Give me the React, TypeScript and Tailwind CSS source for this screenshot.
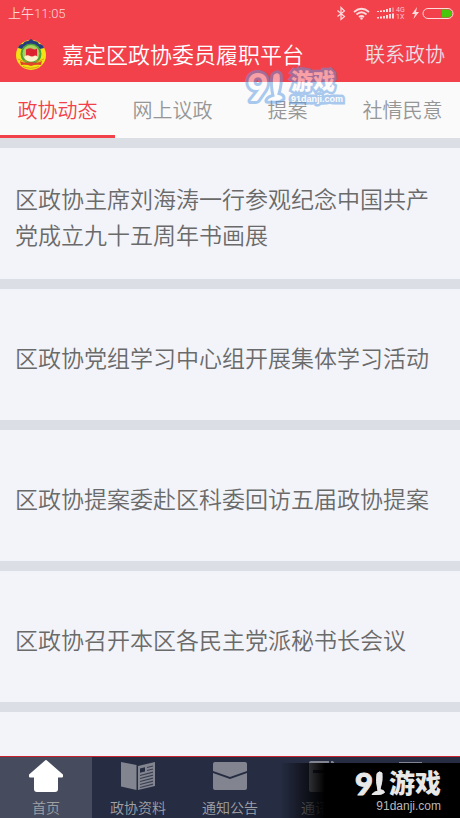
import { useState } from 'react';
import type { ReactNode } from 'react';

const TABS = ['政协动态', '网上议政', '提案', '社情民意'];

const NEWS = [
  '区政协主席刘海涛一行参观纪念中国共产党成立九十五周年书画展',
  '区政协党组学习中心组开展集体学习活动',
  '区政协提案委赴区科委回访五届政协提案',
  '区政协召开本区各民主党派秘书长会议',
  '',
];

const NAV: { label: string; icon: ReactNode }[] = [
  { label: '首页', icon: <HomeIcon /> },
  { label: '政协资料', icon: <PaperIcon /> },
  { label: '通知公告', icon: <MailIcon /> },
  { label: '通讯录', icon: <ContactsIcon /> },
  { label: '', icon: <MoreIcon /> },
];

function HomeIcon() {
  return (
    <svg viewBox="0 0 36 34" className="h-[34px] w-9" fill="#fff" stroke="#fff" strokeWidth="2" strokeLinejoin="round">
      <path d="M18 2 34 16V17.500H29V30Q29 32 27 32H9Q7 32 7 30V17.500H2V16Z" />
    </svg>
  );
}

function PaperIcon() {
  return (
    <svg viewBox="0 0 36 34" className="h-[34px] w-9" fill="#82858f">
      <path d="M1 3 16.500 6V31L1 27.500Z" />
      <path d="M18 7 35 3V27L18 31Z" />
      <path d="M20 9.500 25 8.300V12.500L20 13.700Z" fill="#262c42" />
      <path
        d="M27 8.500 33 7M27 11.500 33 10M20 16.500 33 13.200M20 19.500 33 16.200M20 22.500 33 19.200M20 25.500 33 22.200M20 28.500 33 25.200"
        stroke="#3a3f53"
        strokeWidth="1.200"
      />
    </svg>
  );
}

function MailIcon() {
  return (
    <svg viewBox="0 0 36 34" className="h-[34px] w-9" fill="#82858f">
      <path d="M3 3H33Q35 3 35 5V12L18 18 1 12V5Q1 3 3 3Z" />
      <path d="M1 14 18 20 35 14V29Q35 31 33 31H3Q1 31 1 29Z" />
    </svg>
  );
}

function ContactsIcon() {
  return (
    <svg viewBox="0 0 36 34" className="h-[34px] w-9" fill="#82858f">
      <path d="M7 2H25V33H7Q5 33 5 31V4Q5 2 7 2Z" />
      <path d="M27 2H29L31 5V33H27Z" />
      <path d="M9 11H21V14H9Z" fill="#262c42" />
    </svg>
  );
}

function MoreIcon() {
  return (
    <svg viewBox="0 0 36 34" className="h-[34px] w-9" fill="#82858f">
      <path d="M3 3H26V8H3ZM3 14H26V19H3ZM3 25H26V30H3Z" />
    </svg>
  );
}

function Emblem() {
  return (
    <svg viewBox="0 0 32 32" className="size-8">
      <circle cx="16" cy="16" r="15" fill="#f4e313" />
      <path d="M3 9Q4 5 8 5Q9 2 13 2L16 0 19 2Q23 2 24 5Q28 5 29 9L25 10 22 7 19 8 16 5 13 8 10 7 7 10Z" fill="#283b80" />
      <circle cx="16" cy="15" r="10.500" fill="#4aa13c" />
      <circle cx="16" cy="14.500" r="8.500" fill="#a9cf5c" />
      <path d="M11 10.500Q15 8.500 18 10Q20 11 22 9.500V18H11Z" fill="#dc2430" />
      <path d="M9 18Q11 15.500 14 16.500Q17 18.500 20 16.500Q23 17 23 19Q21 22.500 16 22.500Q11 22.500 9 18Z" fill="#fbf3cd" />
      <path d="M5 22Q10 25 16 23Q22 25 27 22L26 26Q21 25 16 27Q11 25 6 26Z" fill="#e0452a" />
      <path d="M8 27.500Q16 31 24 27.500M3 20Q8 23 12 22M29 20Q24 23 20 22" fill="none" stroke="#d9a31c" strokeWidth="1" />
    </svg>
  );
}

function StatusIcons() {
  return (
    <svg viewBox="0 0 120 16" className="h-4 w-[120px]" fill="none" stroke="#ffdadd">
      <path d="M1.500 4.500 8.500 10.500 5 13.500V1.500L8.500 5 1.500 10.500" strokeWidth="1.200" />
      <path d="M18 6Q25.500 -0.500 33 6M20.500 8.500Q25.500 4 30.500 8.500M23 11Q25.500 9 28 11" strokeWidth="1.700" />
      <circle cx="25.500" cy="12.500" r="1.200" fill="#ffdadd" stroke="none" />
      <path d="M42 5V6M45 4.500V6M48 4V6M51 3V6M54 2V6M42 11V12.500M45 10.500V12.500M48 10V12.500M51 9V12.500M54 8V12.500" strokeWidth="2" />
      <path d="M57 1.500V6" strokeWidth="2" opacity="0.400" />
      <path d="M57 7.500V12.500" strokeWidth="2" />
      <g fill="#ffc3c8" stroke="none" fontFamily="Roboto, sans-serif" fontSize="7" fontWeight="400">
        <text x="60" y="6">4G</text>
        <text x="60" y="13">1X</text>
      </g>
      <path d="M81 1 76 8H79L77.500 13 83 6H80Z" fill="#ffdadd" stroke="none" />
      <rect x="87" y="2.500" width="30" height="10" rx="5" />
      <path d="M106 3.500H112Q116 4.500 116 7.500Q116 10.500 112 11.500H106Z" fill="#47c70b" stroke="none" />
    </svg>
  );
}

// "91" mark: a numeral followed by a shoe-shaped stroke
function BrandMark({ className, outlined }: { className: string; outlined?: boolean }) {
  return (
    <svg
      viewBox="0 0 34 28"
      className={className}
      fill={outlined ? '#fff' : '#e8e8e8'}
      stroke={outlined ? '#5a98e4' : '#e8e8e8'}
      strokeWidth={outlined ? 5 : 1}
      strokeLinejoin="round"
      paintOrder="stroke"
      overflow="visible"
    >
      <text x="0" y="25" fontFamily="Lato, sans-serif" fontSize="31" fontWeight="900">9</text>
      <path d="M22 3.500Q24.500 0.500 27 3Q28 10 25 19.500Q29.500 20 29.500 22.500Q27 25 22 24.500H17Q18 22 23 21Q20.500 11 22 3.500Z" />
    </svg>
  );
}

export default function App() {
  const [tab, setTab] = useState(0);

  return (
    <div className="relative flex h-screen flex-col overflow-hidden bg-[#dcdee5] font-['Roboto','Noto_Sans_CJK_SC',sans-serif] font-[350]">
      <header className="bg-[#f2414b]">
        <div className="flex h-7 items-center justify-between pl-2 pr-1">
          <span className="text-[13px] text-[#ffd5d8]">上午11:05</span>
          <StatusIcons />
        </div>
        <div className="flex h-[54px] items-center px-[15px]">
          <Emblem />
          <h1 className="ml-[15px] flex-1 whitespace-nowrap text-[22px] text-white">嘉定区政协委员履职平台</h1>
          <a href="#contact" className="text-[20px] text-[#eadfe2]">联系政协</a>
        </div>
      </header>

      {/* Tabs */}
      <nav className="grid h-14 shrink-0 grid-cols-4 bg-[#fafafa]">
        {TABS.map((t, i) => (
          <button
            key={t}
            onClick={() => setTab(i)}
            className={`border-b-3 pt-1 text-[20px] ${
              tab === i ? 'border-[#f2414b] text-[#f2414b]' : 'border-transparent text-[#969696]'
            }`}
          >
            {t}
          </button>
        ))}
      </nav>

      {/* News list */}
      <main className="min-h-0 flex-1 overflow-y-auto pt-[10px] [scrollbar-width:none]">
        <ul className="flex flex-col gap-[10px]">
          {NEWS.map((title, i) => (
            <li key={i} className="flex min-h-[131px] items-center bg-[#f3f4f9] px-[15px] pt-[10px]">
              <a href={`#news-${i}`} className="text-[23px] leading-9 text-[#6a6a6a]">{title}</a>
            </li>
          ))}
        </ul>
      </main>

      {/* Bottom navigation */}
      <nav className="grid h-[62px] shrink-0 grid-cols-5 border-t border-[#c8202f] bg-[#262c42]">
        {NAV.map((n, i) => (
          <button
            key={i}
            className={`flex flex-col items-center gap-1 pt-[2px] text-[14px] text-[#a0a1a5] ${
              i === 0 ? 'bg-[#464b5e]' : ''
            }`}
          >
            {n.icon}
            <span className="leading-[22px]">{n.label}</span>
          </button>
        ))}
      </nav>

      {/* Watermarks */}
      <div className="pointer-events-none absolute right-[117px] top-[71px] flex gap-[3px] opacity-50">
        <BrandMark className="h-[34px] w-[41px]" outlined />
        <div className="text-white [-webkit-text-stroke:5px_#5a98e4] [paint-order:stroke_fill]">
          <div className="text-[22px] font-black leading-[22px]">游戏</div>
          <div className="font-['Liberation_Sans',sans-serif] text-[9px] font-bold leading-3">91danji.com</div>
        </div>
      </div>
      <div className="pointer-events-none absolute bottom-0 right-0 flex h-[55px] w-[180px] justify-end bg-linear-to-r from-transparent to-black to-25% pr-[19px] pt-[7px] text-[#e8e8e8]">
        <BrandMark className="h-7 w-[34px]" />
        <div className="flex w-[52px] flex-col items-end">
          <div className="text-[26px] font-black leading-7">游戏</div>
          <div className="font-['Liberation_Sans',sans-serif] text-[12px] font-normal leading-4 text-[#b8b8b8]">91danji.com</div>
        </div>
      </div>
    </div>
  );
}
